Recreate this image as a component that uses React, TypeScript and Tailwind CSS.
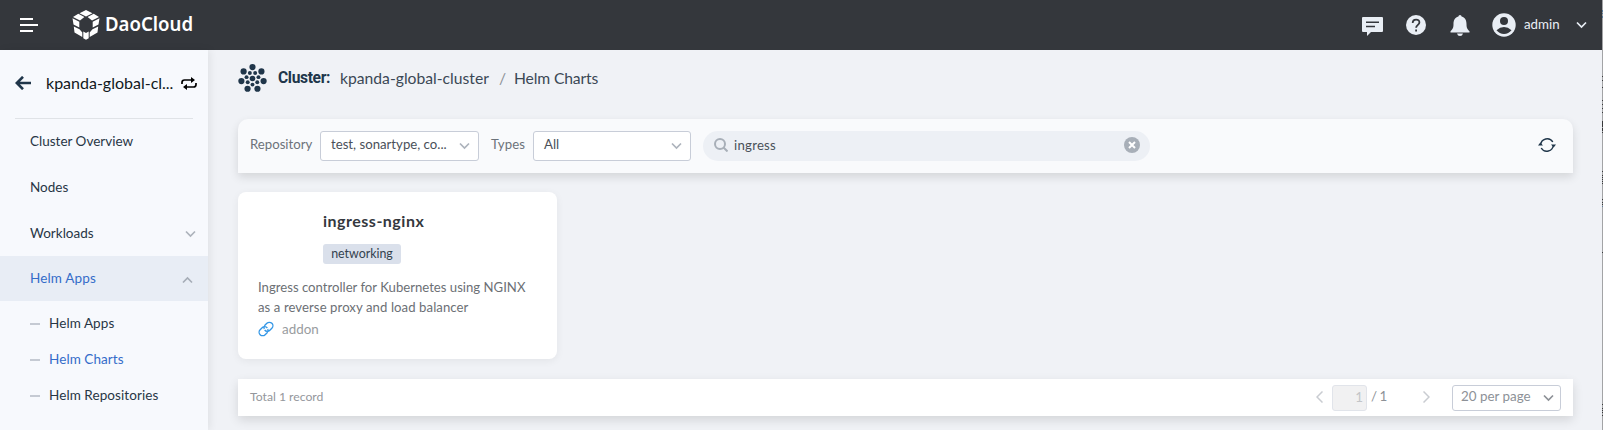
import React from "react";

const Chevron = ({ className, d = "M1 1.5 5.5 6 10 1.5" }: { className: string; d?: string }) => (
  <svg viewBox="0 0 11 8" className={`h-2 w-[11px] shrink-0 fill-none stroke-[1.7] ${className}`}><path d={d} /></svg>
);

const clusterAngles = [0, 1, 2, 3, 4, 5, 6].map((i) => (i * 2 * Math.PI) / 7);

const ClusterIcon = () => (
  <svg viewBox="-14 -14 28 28" className="h-[29px] w-[29px] fill-[#20364a]">
    <circle r="2.7" />
    {clusterAngles.map((a) => (
      <g key={a}>
        <circle cx={11 * Math.sin(a)} cy={-11 * Math.cos(a)} r="3" />
        <circle cx={5.9 * Math.sin(a + Math.PI / 7)} cy={-5.9 * Math.cos(a + Math.PI / 7)} r="1.9" />
      </g>
    ))}
  </svg>
);

const Header = () => (
  <header className="flex h-[50px] items-center bg-[#34373c] text-[#e9eef5]">
    <svg viewBox="0 0 18 16" className="ml-5 h-4 w-[18px] fill-none stroke-white stroke-2"><path d="M0 2h13M0 8h18M0 14h13" /></svg>
    <svg viewBox="0 0 28 30" className="ml-[34px] h-[30px] w-7 fill-white">
      <path d="M14 0 20.5 3.3 14 6.4 7.5 3.3ZM6.3 3.8 12.4 7 8 10.600 1 6.9ZM21.7 3.8 27 6.9 20 10.600 15.6 7ZM.5 8.300 7.300 11.800 7.300 17.600 1.5 14.5ZM27.5 8.300 20.700 11.800 20.700 17.600 26.5 14.5ZM1.8 16.500 7.500 19.300 10.300 22.500 10.300 27 2.5 22.5ZM26.2 16.500 20.500 19.300 17.700 22.500 17.700 27 25.5 22.5ZM11.300 21.500 14 23 16.700 21.500 16.700 28.200 14 29.8 11.300 28.200Z" />
    </svg>
    <span className="ml-[5px] -mt-0.5 w-[88px] origin-left scale-x-[.93] whitespace-nowrap font-['Noto_Sans'] text-[20px] font-semibold text-white">DaoCloud</span>
    <div className="ml-auto flex items-center">
      <svg viewBox="0 0 21 19" className="mt-0.5 h-[19px] w-[21px]"><path className="fill-[#e9eef5]" d="M1 0h19q1 0 1 1v13q0 1-1 1H9l-4 4v-4H1q-1 0-1-1V1q0-1 1-1Z" /><path className="fill-none stroke-[#34373c] stroke-[1.6]" d="M4 5.3h13M4 9.5h9" /></svg>
      <svg viewBox="0 0 20 20" className="ml-[23px] h-5 w-5"><circle cx="10" cy="10" r="10" className="fill-[#e9eef5]" /><path className="fill-none stroke-[#34373c] stroke-[1.8]" d="M6.7 8q0-3.4 3.4-3.4T13.4 7.6c0 2.2-3.3 2.4-3.3 5.2M10.1 14.5v2" /></svg>
      <svg viewBox="0 0 20 21" className="ml-6 h-[21px] w-5 fill-[#e9eef5]"><path d="M10 0q1.5 0 1.6 1.6C15.5 2.7 16.5 6 16.5 9c0 4 .8 5 3 7.2V17.5H.5V16.2C2.7 14 3.5 13 3.5 9c0-3 1-6.3 4.9-7.4Q8.500 0 10 0ZM7 18.500h6q-.6 2.500-3 2.500t-3-2.500Z" /></svg>
      <svg viewBox="0 0 24 24" className="ml-[22px] h-6 w-6"><circle cx="12" cy="12" r="11.7" className="fill-[#e9eef5]" /><circle cx="12" cy="8" r="4" className="fill-[#34373c]" /><path className="fill-[#34373c]" d="M4.500 17.300Q8 14 12 14t7.500 3.300Q16.500 21 12 21t-7.500-3.700Z" /></svg>
      <span className="-mt-0.5 ml-2 w-[36px] whitespace-nowrap text-[13.3px] leading-5">admin</span>
      <Chevron className="ml-4 mr-[15px] stroke-[#e9eef5]" />
    </div>
  </header>
);

const SubItem = ({ label, active }: { label: string; active?: boolean }) => (
  <div className={`flex h-9 items-center pl-[30px] ${active ? "text-[#346cc9]" : ""}`}>
    <span className="mr-[9px] mt-px h-0.5 w-[10px] bg-[#c5cad3]" />{label}
  </div>
);

const Sidebar = () => (
  <aside className="z-10 w-[208px] shrink-0 bg-[#f7f9fd] text-[13.5px] leading-5 text-[#273645] shadow-[2px_0_8px_rgba(0,0,0,0.07)]">
    <div className="mx-[15px] flex h-[69px] w-[182px] items-center">
      <svg viewBox="0 0 16 14" className="-mt-[3px] h-[14px] w-4 fill-none stroke-[#20364a] stroke-[2.6]"><path d="M16 7H2M8 .8 1.800 7 8 13.200" /></svg>
      <span className="-mt-1 ml-[15px] w-[132px] whitespace-nowrap text-[16px] text-[#111820]">kpanda-global-cl...</span>
      <svg viewBox="0 0 16 13" className="-mt-[3px] ml-[3px] h-[13px] w-4 shrink-0"><path className="fill-none stroke-black stroke-[1.7]" d="M1 7V5.500Q1 3 3.500 3H11M15 6v1.500Q15 10 12.500 10H5" /><path d="M10 0 14 3l-4 3ZM6 7 2 10l4 3Z" /></svg>
    </div>
    <div className="mx-[15px] -mt-px h-px w-[178px] bg-[#e0e3e7]" />
    <nav>
      <div className="flex h-[46px] items-center pb-0.5 pl-[30px]">Cluster Overview</div>
      <div className="flex h-[46px] items-center pb-0.5 pl-[30px]">Nodes</div>
      <div className="flex h-[45px] items-center justify-between pb-0.5 pl-[30px] pr-3"><span>Workloads</span><Chevron className="mt-0.5 stroke-[#adb3bc]" /></div>
      <div className="flex h-[45px] items-center justify-between bg-[#e8edf5] pl-[30px] pr-[15px] text-[#346cc9]"><span className="-mt-0.5 tracking-[0.15px]">Helm Apps</span><Chevron className="mt-0.5 stroke-[#a6adb7]" d="M1 6.500 5.500 2 10 6.500" /></div>
      <div className="pt-1 tracking-[0.08px]">
        <SubItem label="Helm Apps" /><SubItem label="Helm Charts" active /><SubItem label="Helm Repositories" />
      </div>
    </nav>
  </aside>
);

const Select = ({ label, className }: { label: string; className: string }) => (
  <div className={`flex h-[30px] items-center justify-between rounded-[3px] border border-[#c8cdd8] bg-white pl-[10px] pr-2 text-[#4a5059] ${className}`}>
    <span className="-mt-0.5 whitespace-nowrap">{label}</span><Chevron className="stroke-[#adb3bc]" />
  </div>
);

const Toolbar = () => (
  <section className="flex h-[54px] items-center rounded-t-[10px] bg-[#f9fafc] pl-3 pr-[17px] text-[13.2px] text-[#6c727a] shadow-[0_4px_10px_rgba(0,0,0,0.12)]">
    <span className="-mt-0.5 w-[70px]">Repository</span>
    <Select className="w-[159px]" label="test, sonartype, co..." />
    <span className="-mt-0.5 ml-3 w-[42px] tracking-[0.1px]">Types</span>
    <Select className="w-[158px]" label="All" />
    <div className="ml-3 flex h-[30px] w-[447px] items-center rounded-full bg-[#edf0f5] pl-[11px] pr-[10px] text-[#4a5059]">
      <svg viewBox="0 0 14 14" className="-mt-0.5 mr-[6px] h-[14px] w-[14px] fill-none stroke-[#a8afb8] stroke-2"><circle cx="6" cy="6" r="5" /><path d="m9.500 9.500 4 4" /></svg>
      <span className="tracking-[0.25px]">ingress</span>
      <svg viewBox="0 0 16 16" className="-mt-0.5 ml-auto h-4 w-4"><circle cx="8" cy="8" r="8" className="fill-[#a8afb8]" /><path className="stroke-white stroke-2" d="m5 5 6 6M11 5l-6 6" /></svg>
    </div>
    <svg viewBox="0 0 18 16" className="-mt-0.5 ml-auto h-4 w-[18px]"><path className="fill-none stroke-[#20364a] stroke-[1.4]" d="M2.600 8A6.600 6.800 0 0 1 14.800 5M15.400 8A6.600 6.800 0 0 1 3.200 11" /><path className="fill-[#20364a]" d="M0 8.500 2.300 5.500 5 8.500ZM13 7.500h5l-2.300 3Z" /></svg>
  </section>
);

const ChartCard = () => (
  <article className="mt-[19px] h-[167px] w-[319px] rounded-lg bg-white pl-5 shadow-[0_2px_8px_rgba(0,0,0,0.06)]">
    <div className="pl-[65px] pt-[18px]">
      <h2 className="text-[16px] font-bold leading-[22px] tracking-[0.5px] text-[#34383e]">ingress-nginx</h2>
      <span className="mt-3 flex h-5 w-[78px] items-center justify-center rounded-[3px] bg-[#dae0eb] text-[12.4px] text-[#34424f]">networking</span>
    </div>
    <p className="mt-[13px] whitespace-nowrap text-[13.15px] leading-5 text-[#6c7075]">Ingress controller for Kubernetes using NGINX<br /><span className="tracking-[0.08px]">as a reverse proxy and load balancer</span></p>
    <div className="mt-0.5 flex h-5 items-center text-[13.4px] text-[#999ca0]">
      <svg viewBox="0 0 24 24" className="mr-[8px] h-4 w-4 fill-none stroke-[#3296e6] stroke-2"><path d="M10 13.500a5.200 5.200 0 0 0 7.800.5l3-3a5.300 5.300 0 0 0-7.500-7.500l-3 3a5.300 5.300 0 0 0-1 5.500M14 10.500a5.200 5.200 0 0 0-7.800-.5l-3 3a5.300 5.300 0 0 0 7.500 7.500l3-3a5.300 5.300 0 0 0 1-5.500" /></svg>
      addon
    </div>
  </article>
);

const Pagination = () => (
  <footer className="mt-5 flex h-[37px] items-center bg-white px-3 text-[13.4px] text-[#8d9197] shadow-[0_4px_10px_rgba(0,0,0,0.12)]">
    <span className="text-[12.2px] text-[#94979c]">Total 1 record</span>
    <svg viewBox="0 0 7 12" className="-mt-px ml-auto h-3 w-[7px] fill-none stroke-[#c9ccd1] stroke-[1.5]"><path d="M6.500.5 1 6l5.500 5.500" /></svg>
    <span className="ml-[9px] flex h-[26px] w-[35px] items-center justify-end rounded-[3px] border border-[#e1e4ea] bg-[#f1f1f2] pr-[3px] text-[#c3c5c8]">1</span>
    <span className="-mt-0.5 ml-1 w-[52px] tracking-[-0.5px]">/ 1</span>
    <svg viewBox="0 0 7 12" className="-mt-px h-3 w-[7px] fill-none stroke-[#c9ccd1] stroke-[1.5]"><path d="M.5.5 6 6 .5 11.500" /></svg>
    <div className="ml-[22px] flex h-[26px] w-[109px] items-center justify-between rounded-[3px] border border-[#c8cdd8] pl-2 pr-[6px]"><span className="-mt-0.5 whitespace-nowrap">20 per page</span><Chevron className="stroke-[#8d9197]" /></div>
  </footer>
);

export default function App() {
  return (
    <div className="flex h-[430px] w-[1603px] overflow-hidden bg-[#f0f2f6] font-[Lato,sans-serif]">
      <div className="w-[1602px] shrink-0">
        <Header />
        <div className="flex h-[380px]">
          <Sidebar />
          <main className="w-[1394px] pl-[30px] pr-[29px] pt-[14px]">
            <div className="flex h-7 items-center text-[15.7px] text-[#3b4855]">
              <ClusterIcon />
              <span className="ml-[11px] mt-px w-[62px] font-[Roboto,sans-serif] text-[15.6px] font-bold tracking-[-0.35px] text-[#20364a]">Cluster:</span>
              <span className="mt-0.5 w-[159px]">kpanda-global-cluster</span>
              <span className="mt-0.5 w-[15px] text-[#8d9197]">/</span>
              <span className="mt-0.5 tracking-[-0.15px]">Helm Charts</span>
            </div>
            <div className="mt-[27px]"><Toolbar /></div>
            <ChartCard />
            <Pagination />
          </main>
        </div>
      </div>
      <svg viewBox="0 0 1 430" className="h-[430px] w-px shrink-0 bg-[#a3a4a6]" shapeRendering="crispEdges">
        <path className="fill-none stroke-[#5b7c9c]" d="M.5 10v2M.5 13v1M.5 16v2M.5 206v1" />
        <path className="fill-none stroke-[#38393b]" d="M.5 76v1M.5 80v1M.5 87v1M.5 100v1M.5 104v1M.5 108v1M.5 112v1M.5 121v6M.5 128v3M.5 132v1M.5 171v1M.5 175v1M.5 177v1M.5 179v1M.5 181v1M.5 183v1M.5 199v1M.5 202v1M.5 204v1M.5 252v1M.5 404v1M.5 408v1M.5 410v1M.5 412v1M.5 415v1" />
      </svg>
    </div>
  );
}
